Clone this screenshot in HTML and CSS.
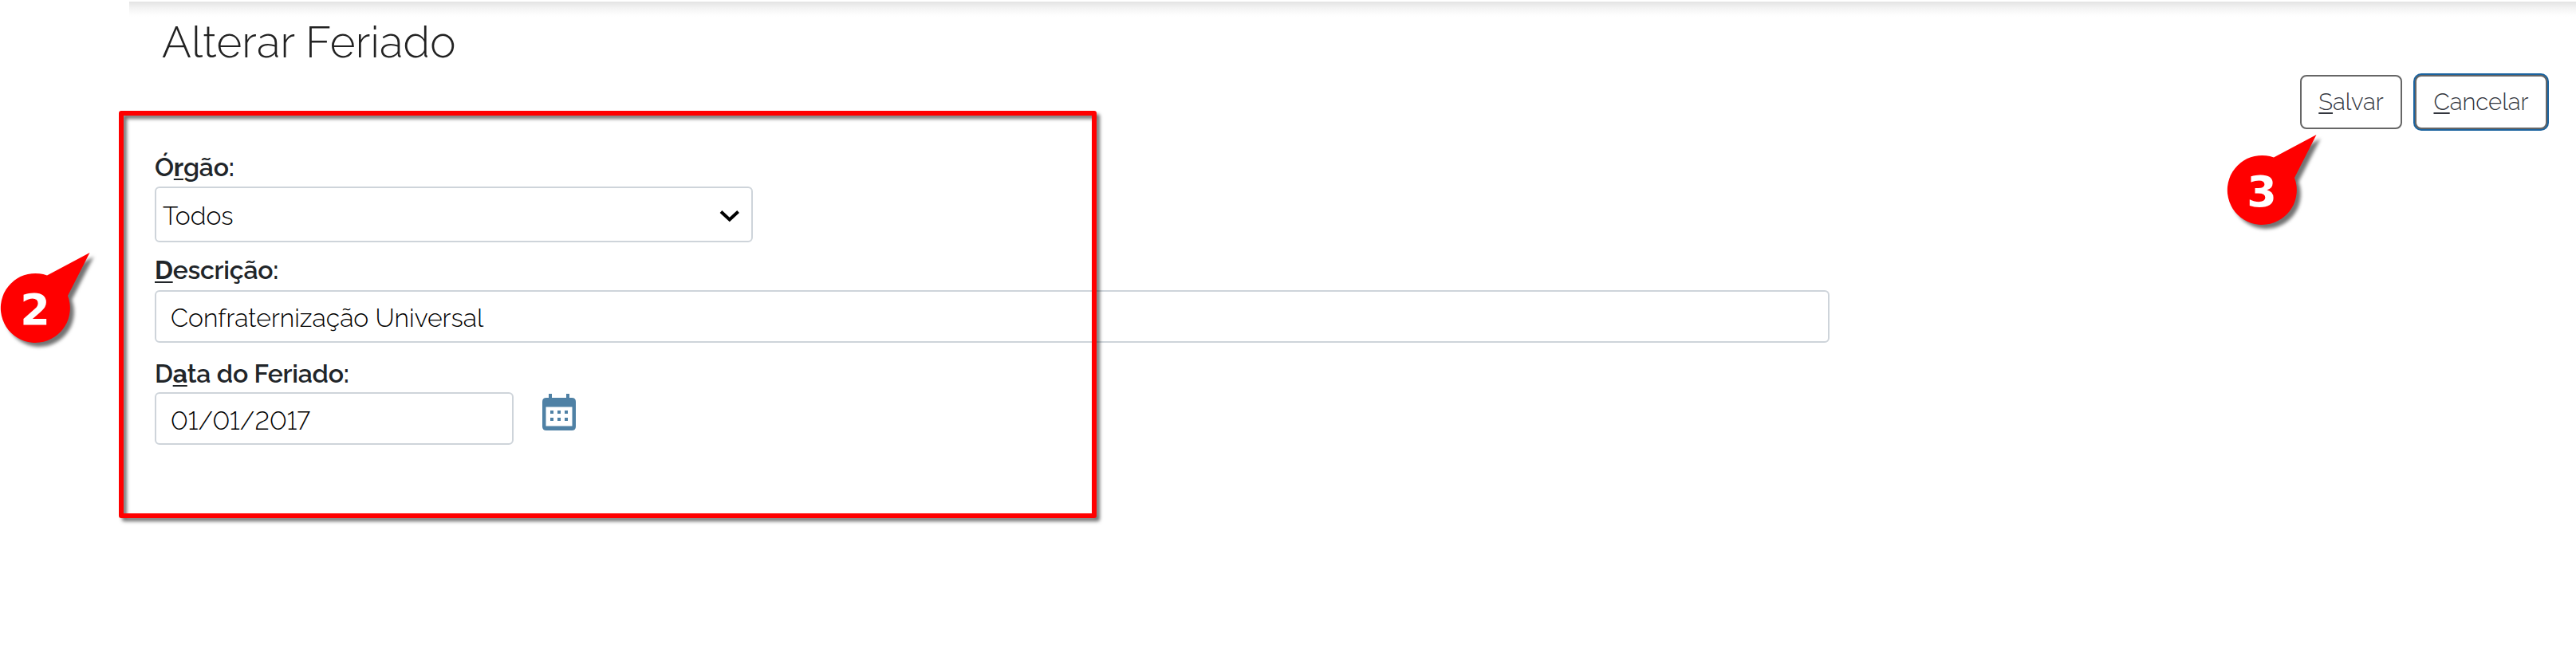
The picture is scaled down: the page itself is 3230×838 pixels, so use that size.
FILE: index.html
```html
<!DOCTYPE html>
<html lang="pt-BR">
<head>
<meta charset="utf-8">
<title>Alterar Feriado</title>
<link rel="stylesheet" href="styles.css">
</head>
<body>
<main class="page">
  <header class="header">
    <h1 class="title">Alterar Feriado</h1>
    <div class="actions">
      <button class="btn" type="button"><u>S</u>alvar</button>
      <button class="btn btn-focus" type="button"><u>C</u>ancelar</button>
    </div>
  </header>
  <form class="form">
    <div class="field field-orgao">
      <div class="label">Ó<u>r</u>gão:</div>
      <div class="control select">
        <span>Todos</span>
        <svg class="chevron" width="26" height="16" viewBox="0 0 26 16"><path d="M2 2.5 12.8 12.5 23.6 2.5" fill="none" stroke="#000" stroke-width="4"/></svg>
      </div>
    </div>
    <div class="field field-descricao">
      <div class="label"><u>D</u>escrição:</div>
      <div class="control input-long">Confraternização Universal</div>
    </div>
    <div class="field field-data">
      <div class="label">D<u>a</u>ta do Feriado:</div>
      <div class="row">
        <div class="control input-date">01/01/2017</div>
        <svg class="calendar" width="42" height="46" viewBox="0 0 42 46">
          <path fill="#4f81a5" fill-rule="evenodd" d="M8 0h4v5h18V0h4v5h3q5 0 5 5v31q0 5-5 5H5q-5 0-5-5V10q0-5 5-5h3zM4.500 16.500v24h33v-24z"/>
          <path fill="#4f81a5" d="M10 21h4v4h-4zM19 21h4v4h-4zM28 21h4v4h-4zM10 30h4v4h-4zM19 30h4v4h-4zM28 30h4v4h-4z"/>
        </svg>
      </div>
    </div>
  </form>
</main>
<div class="frame"></div>
<div class="pin pin-2">
  <svg class="pin-shape" width="113" height="114" viewBox="0 0 113 114"><path d="M112.500 1 59 29.500A43.500 43.500 0 1 0 85 55z" fill="#f00"/></svg>
  <span class="pin-number">2</span>
</div>
<div class="pin pin-3">
  <svg class="pin-shape" width="113" height="114" viewBox="0 0 113 114"><path d="M112.500 1 59 29.500A43.500 43.500 0 1 0 85 55z" fill="#f00"/></svg>
  <span class="pin-number">3</span>
</div>
</body>
</html>
```
FILE: styles.css
```css
* { box-sizing: border-box; }
body {
  margin: 0;
  height: 838px;
  overflow: hidden;
  position: relative;
  background: #fff;
  font-family: Raleway, "Open Sans", sans-serif;
  font-feature-settings: "lnum" 1;
}
u { text-decoration-thickness: 2px; text-underline-offset: 3px; text-decoration-skip-ink: none; }
.page {
  margin: 2px 0 0 162px;
  padding-left: 32px;
  height: 836px;
  background: linear-gradient(#e3e3e3, #f3f3f3 8px, #fdfdfd 16px, #fff 20px);
}
.header { display: flex; justify-content: space-between; height: 188px; padding-right: 36px; }
.title { margin: 21px 0 0 9px; font-size: 54.5px; font-weight: 300; letter-spacing: .2px; line-height: 60px; color: #222; }
.actions { display: flex; gap: 16px; align-items: flex-start; padding-top: 92px; }
.btn {
  height: 68px;
  width: 128px;
  padding: 0 0 1px;
  border: 2px solid #666;
  border-radius: 8px;
  background: #fff;
  color: #33363e;
  font: 300 29.3px Raleway, "Open Sans", sans-serif;
}
.btn-focus { width: 166px; box-shadow: 0 0 0 2px #1b639f; }
.label { font-size: 32px; font-weight: 600; letter-spacing: -.25px; line-height: 40px; color: #212529; }
.label u { font-weight: 700; }
.control {
  display: flex;
  align-items: center;
  border: 2px solid #ced4da;
  border-radius: 6px;
  background: #fff;
  color: #000;
  font-size: 32px;
  font-weight: 300;
  line-height: 38px;
}
.select { width: 750px; height: 70px; margin-top: 4px; padding: 3px 14px 0 8px; justify-content: space-between; }
.field-descricao { margin-top: 15px; }
.input-long { width: 2100px; height: 66px; margin-top: 5px; padding: 3px 0 0 18px; }
.field-data { margin-top: 19px; }
.row { display: flex; gap: 36px; margin-top: 3px; }
.input-date { width: 450px; height: 66px; padding: 6px 0 0 18px; letter-spacing: .15px; }
.calendar { margin-top: 2px; }
.frame {
  position: absolute;
  left: 149px;
  top: 139px;
  width: 1226px;
  height: 511px;
  border: 6px solid #f00;
  border-radius: 3px;
  filter: drop-shadow(4px 4px 2px rgba(0, 0, 0, .55));
}
.pin { position: absolute; width: 113px; height: 114px; }
.pin-2 { left: 0; top: 316px; }
.pin-3 { left: 2792px; top: 168px; }
.pin-shape { display: block; overflow: visible; filter: drop-shadow(5px 5px 2px rgba(0, 0, 0, .55)); }
.pin-number {
  position: absolute;
  left: 0;
  top: 43px;
  width: 88px;
  text-align: center;
  color: #fff;
  font: 700 54px/60px "DejaVu Sans", sans-serif;
}
```
